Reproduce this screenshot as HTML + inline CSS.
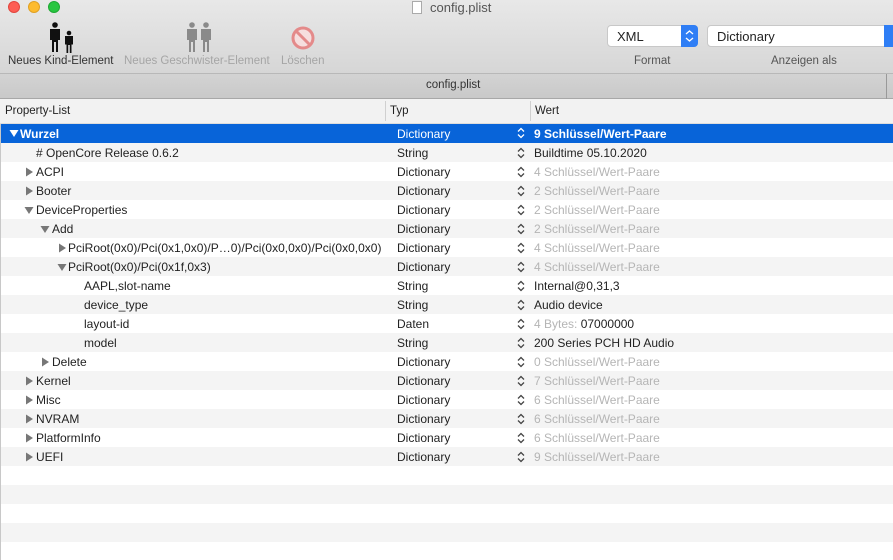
<!DOCTYPE html>
<html><head><meta charset="utf-8"><style>
*{margin:0;padding:0;box-sizing:border-box}
body{width:893px;height:560px;overflow:hidden;background:#fff;font-family:"Liberation Sans",sans-serif;font-size:12px;color:#222;position:relative}
.tb{position:absolute;left:0;top:0;width:893px;height:74px;background:linear-gradient(#e8e8e8,#d6d6d6);border-bottom:1px solid #b8b8b8}
.tab{position:absolute;left:0;top:74px;width:893px;height:25px;background:linear-gradient(#d3d3d3,#c9c9c9);border-bottom:1px solid #a8a8a8}
.hdr{position:absolute;left:0;top:99px;width:893px;height:25px;background:#f2f2f2;border-bottom:1px solid #ddd}
.abs{position:absolute;white-space:nowrap}
.dot{position:absolute;top:1px;width:12px;height:12px;border-radius:50%}
.row{position:absolute;left:0;width:893px;height:19px}
.row>span{position:absolute;top:3px;white-space:nowrap}
.g{background:#f4f4f4}
.sel{background:#0864d9;color:#fff}
.grey{color:#b5b5b5}
.pop{position:absolute;top:25px;height:22px;background:#fff;border:1px solid #c8c8c8;border-radius:4px;font-size:13px;padding:3px 0 0 9px}
.pb{position:absolute;right:-1px;top:-1px;width:17px;height:22px;background:#2f7ef5;border-radius:0 4px 4px 0}
svg.r,svg.d,svg.u{position:absolute}
</style></head><body>
<div class="tb"></div>
<div class="dot" style="left:8px;background:#fd5d54;border:1px solid #e1463e"></div>
<div class="dot" style="left:28px;background:#fdbb2e;border:1px solid #e0a124"></div>
<div class="dot" style="left:48px;background:#28c640;border:1px solid #1fa833"></div>
<div class="abs" style="left:412px;top:1px;width:10px;height:13px;background:#fff;border:1px solid #aaa"></div>
<div class="abs" style="left:430px;top:0px;font-size:13px;color:#555">config.plist</div>
<svg class="abs" style="left:48px;top:22px" width="28" height="31" viewBox="0 0 28 31"><circle cx="7" cy="3" r="2.8" fill="#111"/><path d="M2 7h10v11h-2v12H8V20H6v10H4V18H2z" fill="#111"/><circle cx="21" cy="11" r="2.3" fill="#111"/><path d="M17 14h8v8.5h-1.5V31h-1.7v-8h-1.6v8h-1.7v-8.5H17z" fill="#111"/></svg>
<div class="abs" style="left:8px;top:55px;font-size:11.5px;color:#333">Neues Kind-Element</div>
<svg class="abs" style="left:185px;top:22px" width="30" height="31" viewBox="0 0 30 31"><circle cx="7" cy="3" r="2.8" fill="#8a8a8a"/><path d="M2 7h10v11h-2v12H8V20H6v10H4V18H2z" fill="#8a8a8a"/><circle cx="21" cy="3" r="2.8" fill="#8a8a8a"/><path d="M16 7h10v11h-2v12h-2V20h-2v10h-2V18h-2z" fill="#8a8a8a"/></svg>
<div class="abs" style="left:124px;top:55px;font-size:11.5px;color:#a5a5a5">Neues Geschwister-Element</div>
<svg class="abs" style="left:291px;top:26px" width="24" height="24" viewBox="0 0 24 24"><circle cx="12" cy="12" r="10" fill="#f6dede" stroke="#e48a8a" stroke-width="3"/><path d="M5 5l14 14" stroke="#e48a8a" stroke-width="3"/></svg>
<div class="abs" style="left:281px;top:55px;font-size:11.5px;color:#a5a5a5">Löschen</div>
<div class="pop" style="left:607px;width:91px">XML<div class="pb"><svg width="17" height="22"><path d="M5 9l3.5-3 3.5 3M5 13l3.5 3 3.5-3" stroke="#fff" fill="none" stroke-width="1.3"/></svg></div></div>
<div class="pop" style="left:707px;width:195px">Dictionary<div class="pb" style="right:0"></div></div>
<div class="abs" style="left:634px;top:55px;font-size:11.5px;color:#555">Format</div>
<div class="abs" style="left:771px;top:55px;font-size:11.5px;color:#555">Anzeigen als</div>
<div class="tab"></div>
<div class="abs" style="left:426px;top:79px;font-size:11.5px;color:#333">config.plist</div>
<div class="abs" style="left:886px;top:74px;width:1px;height:25px;background:#999"></div>
<div class="hdr"></div>
<div class="abs" style="left:5px;top:105px;font-size:11.5px">Property-List</div>
<div class="abs" style="left:385px;top:101px;width:1px;height:20px;background:#d0d0d0"></div>
<div class="abs" style="left:390px;top:105px;font-size:11.5px">Typ</div>
<div class="abs" style="left:530px;top:101px;width:1px;height:20px;background:#d0d0d0"></div>
<div class="abs" style="left:535px;top:105px;font-size:11.5px">Wert</div>

<svg width="0" height="0" style="position:absolute"><defs>
<symbol id="R" viewBox="0 0 9 10"><path d="M1 0.5L8 5 1 9.5z"/></symbol>
<symbol id="D" viewBox="0 0 10 9"><path d="M0.5 1h9L5 8z"/></symbol>
<symbol id="UD" viewBox="0 0 8 12"><path d="M1 4.5L4 1.5 7 4.5M1 7.5L4 10.5 7 7.5" fill="none" stroke="currentColor" stroke-width="1.3"/></symbol>
</defs></svg>

<div class="row sel" style="top:124px"><svg class="d" style="left:9px;top:5px;fill:#fff" width="10" height="9"><use href="#D"/></svg><span style="left:20px;font-weight:bold">Wurzel</span><span style="left:397px">Dictionary</span><svg class="u" style="left:517px;top:3px;color:#fff" width="8" height="12"><use href="#UD"/></svg><span style="left:534px;font-weight:bold">9 Schlüssel/Wert-Paare</span></div>
<div class="row g" style="top:143px"><span style="left:36px"># OpenCore Release 0.6.2</span><span style="left:397px">String</span><svg class="u" style="left:517px;top:4px;color:#444" width="8" height="12"><use href="#UD"/></svg><span style="left:534px">Buildtime 05.10.2020</span></div>
<div class="row" style="top:162px"><svg class="r" style="left:25px;top:5px;fill:#777" width="9" height="10"><use href="#R"/></svg><span style="left:36px">ACPI</span><span style="left:397px">Dictionary</span><svg class="u" style="left:517px;top:4px;color:#444" width="8" height="12"><use href="#UD"/></svg><span class="grey" style="left:534px">4 Schlüssel/Wert-Paare</span></div>
<div class="row g" style="top:181px"><svg class="r" style="left:25px;top:5px;fill:#777" width="9" height="10"><use href="#R"/></svg><span style="left:36px">Booter</span><span style="left:397px">Dictionary</span><svg class="u" style="left:517px;top:4px;color:#444" width="8" height="12"><use href="#UD"/></svg><span class="grey" style="left:534px">2 Schlüssel/Wert-Paare</span></div>
<div class="row" style="top:200px"><svg class="d" style="left:24px;top:6px;fill:#777" width="10" height="9"><use href="#D"/></svg><span style="left:36px">DeviceProperties</span><span style="left:397px">Dictionary</span><svg class="u" style="left:517px;top:4px;color:#444" width="8" height="12"><use href="#UD"/></svg><span class="grey" style="left:534px">2 Schlüssel/Wert-Paare</span></div>
<div class="row g" style="top:219px"><svg class="d" style="left:40px;top:6px;fill:#777" width="10" height="9"><use href="#D"/></svg><span style="left:52px">Add</span><span style="left:397px">Dictionary</span><svg class="u" style="left:517px;top:4px;color:#444" width="8" height="12"><use href="#UD"/></svg><span class="grey" style="left:534px">2 Schlüssel/Wert-Paare</span></div>
<div class="row" style="top:238px"><svg class="r" style="left:58px;top:5px;fill:#777" width="9" height="10"><use href="#R"/></svg><span style="left:68px">PciRoot(0x0)/Pci(0x1,0x0)/P…0)/Pci(0x0,0x0)/Pci(0x0,0x0)</span><span style="left:397px">Dictionary</span><svg class="u" style="left:517px;top:4px;color:#444" width="8" height="12"><use href="#UD"/></svg><span class="grey" style="left:534px">4 Schlüssel/Wert-Paare</span></div>
<div class="row g" style="top:257px"><svg class="d" style="left:57px;top:6px;fill:#777" width="10" height="9"><use href="#D"/></svg><span style="left:68px">PciRoot(0x0)/Pci(0x1f,0x3)</span><span style="left:397px">Dictionary</span><svg class="u" style="left:517px;top:4px;color:#444" width="8" height="12"><use href="#UD"/></svg><span class="grey" style="left:534px">4 Schlüssel/Wert-Paare</span></div>
<div class="row" style="top:276px"><span style="left:84px">AAPL,slot-name</span><span style="left:397px">String</span><svg class="u" style="left:517px;top:4px;color:#444" width="8" height="12"><use href="#UD"/></svg><span style="left:534px">Internal@0,31,3</span></div>
<div class="row g" style="top:295px"><span style="left:84px">device_type</span><span style="left:397px">String</span><svg class="u" style="left:517px;top:4px;color:#444" width="8" height="12"><use href="#UD"/></svg><span style="left:534px">Audio device</span></div>
<div class="row" style="top:314px"><span style="left:84px">layout-id</span><span style="left:397px">Daten</span><svg class="u" style="left:517px;top:4px;color:#444" width="8" height="12"><use href="#UD"/></svg><span style="left:534px"><span class="grey">4 Bytes:</span> 07000000</span></div>
<div class="row g" style="top:333px"><span style="left:84px">model</span><span style="left:397px">String</span><svg class="u" style="left:517px;top:4px;color:#444" width="8" height="12"><use href="#UD"/></svg><span style="left:534px">200 Series PCH HD Audio</span></div>
<div class="row" style="top:352px"><svg class="r" style="left:41px;top:5px;fill:#777" width="9" height="10"><use href="#R"/></svg><span style="left:52px">Delete</span><span style="left:397px">Dictionary</span><svg class="u" style="left:517px;top:4px;color:#444" width="8" height="12"><use href="#UD"/></svg><span class="grey" style="left:534px">0 Schlüssel/Wert-Paare</span></div>
<div class="row g" style="top:371px"><svg class="r" style="left:25px;top:5px;fill:#777" width="9" height="10"><use href="#R"/></svg><span style="left:36px">Kernel</span><span style="left:397px">Dictionary</span><svg class="u" style="left:517px;top:4px;color:#444" width="8" height="12"><use href="#UD"/></svg><span class="grey" style="left:534px">7 Schlüssel/Wert-Paare</span></div>
<div class="row" style="top:390px"><svg class="r" style="left:25px;top:5px;fill:#777" width="9" height="10"><use href="#R"/></svg><span style="left:36px">Misc</span><span style="left:397px">Dictionary</span><svg class="u" style="left:517px;top:4px;color:#444" width="8" height="12"><use href="#UD"/></svg><span class="grey" style="left:534px">6 Schlüssel/Wert-Paare</span></div>
<div class="row g" style="top:409px"><svg class="r" style="left:25px;top:5px;fill:#777" width="9" height="10"><use href="#R"/></svg><span style="left:36px">NVRAM</span><span style="left:397px">Dictionary</span><svg class="u" style="left:517px;top:4px;color:#444" width="8" height="12"><use href="#UD"/></svg><span class="grey" style="left:534px">6 Schlüssel/Wert-Paare</span></div>
<div class="row" style="top:428px"><svg class="r" style="left:25px;top:5px;fill:#777" width="9" height="10"><use href="#R"/></svg><span style="left:36px">PlatformInfo</span><span style="left:397px">Dictionary</span><svg class="u" style="left:517px;top:4px;color:#444" width="8" height="12"><use href="#UD"/></svg><span class="grey" style="left:534px">6 Schlüssel/Wert-Paare</span></div>
<div class="row g" style="top:447px"><svg class="r" style="left:25px;top:5px;fill:#777" width="9" height="10"><use href="#R"/></svg><span style="left:36px">UEFI</span><span style="left:397px">Dictionary</span><svg class="u" style="left:517px;top:4px;color:#444" width="8" height="12"><use href="#UD"/></svg><span class="grey" style="left:534px">9 Schlüssel/Wert-Paare</span></div>
<div class="row g" style="top:485px"></div>
<div class="row g" style="top:523px"></div>
<div class="abs" style="left:0;top:124px;width:1px;height:436px;background:#c8c8c8"></div>
</body></html>
